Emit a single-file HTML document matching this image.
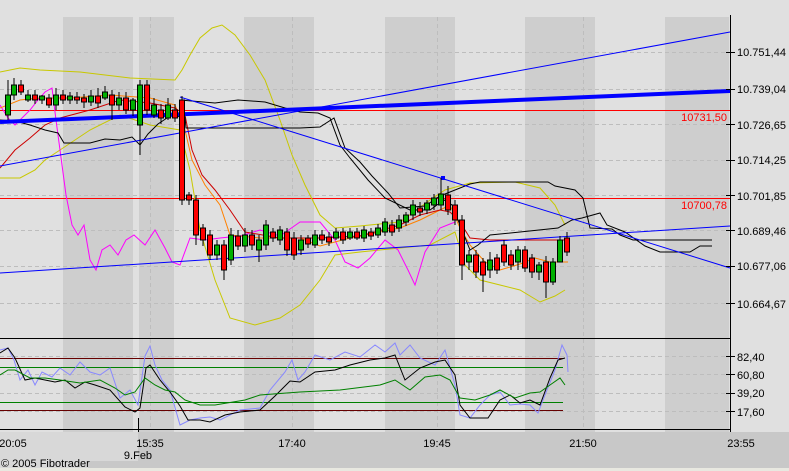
<!DOCTYPE html>
<html><head><meta charset="utf-8"><style>
html,body{margin:0;padding:0;background:#e0e0e0;}
svg{display:block;font-family:"Liberation Sans",sans-serif;}
</style></head><body>
<svg width="789" height="471" viewBox="0 0 789 471" xmlns="http://www.w3.org/2000/svg">
<rect width="789" height="471" fill="#e0e0e0"/>
<g fill="#cecece">
<rect x="63" y="17" width="70" height="415"/>
<rect x="139" y="17" width="35" height="415"/>
<rect x="244" y="17" width="70" height="415"/>
<rect x="385" y="17" width="70" height="415"/>
<rect x="525" y="17" width="70" height="415"/>
<rect x="665" y="17" width="64" height="415"/>
</g>
<g stroke="#bdbdbd" stroke-dasharray="4,3" stroke-width="1">
<line x1="0" y1="52.5" x2="730" y2="52.5"/><line x1="0" y1="89.5" x2="730" y2="89.5"/>
<line x1="0" y1="124.5" x2="730" y2="124.5"/><line x1="0" y1="160.5" x2="730" y2="160.5"/>
<line x1="0" y1="195.5" x2="730" y2="195.5"/><line x1="0" y1="230.5" x2="730" y2="230.5"/>
<line x1="0" y1="266.5" x2="730" y2="266.5"/><line x1="0" y1="303.5" x2="730" y2="303.5"/>
<line x1="0" y1="356.5" x2="730" y2="356.5"/><line x1="0" y1="374.5" x2="730" y2="374.5"/>
<line x1="0" y1="393.5" x2="730" y2="393.5"/><line x1="0" y1="411.5" x2="730" y2="411.5"/>
<line x1="150.5" y1="17" x2="150.5" y2="429"/><line x1="292.5" y1="17" x2="292.5" y2="429"/>
<line x1="437.5" y1="17" x2="437.5" y2="429"/><line x1="583.5" y1="17" x2="583.5" y2="429"/>
</g>
<line x1="0" y1="110.5" x2="730" y2="110.5" stroke="#ff0000"/>
<line x1="0" y1="198.5" x2="730" y2="198.5" stroke="#ff0000"/>
<text x="727" y="121" font-size="11" fill="#ff0000" text-anchor="end">10731,50</text>
<text x="727" y="209" font-size="11" fill="#ff0000" text-anchor="end">10700,78</text>
<g fill="none" stroke-width="1">
<polyline stroke="#c8c800" points="0,72 20,68 40,70 80,72 130,78 175,80 182,70 190,55 200,38 212,28 222,25 235,35 250,55 265,80 280,120 292,155 305,185 320,215 335,228 360,226 400,222 430,200 445,190 470,183 515,182 540,188 555,205 565,225"/>
<polyline stroke="#c8c800" points="0,178 20,178 35,170 45,160 60,150 90,130 120,115 150,125 180,130 190,170 200,230 215,280 230,318 255,325 280,318 300,305 320,280 335,255 360,252 400,248 430,245 455,232 465,265 480,280 500,285 520,290 530,296 540,302 555,296 565,290"/>
<polyline stroke="#ff00ff" points="0,105 8,118 15,125 22,118 30,110 38,100 45,92 52,88 56,120 60,150 66,195 72,225 78,235 84,225 90,260 96,270 102,250 110,245 118,255 126,240 134,235 145,245 155,230 165,248 172,262 180,265 190,238 205,240 220,238 240,236 260,230 280,236 300,222 320,222 335,240 345,262 358,268 370,258 385,240 398,250 408,270 415,285 425,252 440,228 455,222"/>
<polyline stroke="#ff8000" points="0,108 20,100 40,98 70,98 110,95 150,98 175,105 185,130 192,160 205,185 220,205 230,235 260,238 300,238 320,246 350,238 380,232 400,228 420,220 440,210 450,205 460,228 470,245 485,262 500,270 520,264 535,258 550,262 560,262 568,262"/>
<polyline stroke="#cc0000" points="0,168 15,150 30,138 45,125 60,118 90,110 120,100 150,103 175,108 185,115 192,150 202,175 215,190 230,210 245,232 280,238 320,238 360,236 400,225 420,215 440,210 450,212 460,222 470,238 490,240 520,240 545,240 565,240"/>
<polyline stroke="#000" points="0,120 15,121 30,125 45,130 58,133 64,143 90,143 105,139 120,140 132,137 140,145 148,134 158,124 170,116 185,117 186,128 300,128 320,127 334,118 345,148 360,162 372,176 388,193 400,208 425,206 440,196 455,190 470,184 480,182 520,182 548,182 555,186 575,190 583,198 587,215 590,228 612,229 620,235 633,240 712,240"/>
<polyline stroke="#000" points="180,100 215,103 238,100 265,102 285,108 300,112 318,113 330,118 340,145 350,158 368,180 385,198 410,210 430,210 444,200 452,205 470,250 478,245 490,235 520,232 558,228 572,220 582,218 600,213 607,225 625,232 645,246 660,252 690,252 700,246 712,246"/>
</g>
<g stroke="#0000ff" fill="none">
<line x1="0" y1="166" x2="730" y2="32" stroke-width="1"/>
<line x1="0" y1="122" x2="730" y2="91" stroke-width="4"/>
<line x1="180" y1="97" x2="730" y2="268" stroke-width="1"/>
<line x1="0" y1="273" x2="730" y2="226" stroke-width="1"/>
</g>
<rect x="441" y="176" width="4" height="4" fill="#0000ff"/>
<g stroke="#000" stroke-width="1">
<g fill="#00b000">
<path d="M8 80V120M14 78V100M28 90V102M42 95V104M56 88V110M70 92V104M91 90V106M105 86V100M119 92V110M133 98V116M140 80V155M154 98V118M168 98V120M217 240V260M231 228V265M245 228V252M259 235V262M266 220V250M280 226V245M301 235V255M315 230V248M336 228V240M350 228V240M364 226V242M378 224V238M385 218V236M399 215V232M406 212V226M413 200V220M427 200V214M434 194V210M441 178V210M469 250V270M490 252V278M518 246V270M539 262V280M553 258V285M560 236V262"/>
<rect x="5.5" y="95" width="5" height="20"/><rect x="11.5" y="85" width="5" height="10"/>
<rect x="25.5" y="95" width="5" height="5"/><rect x="39.5" y="96" width="5" height="4"/>
<rect x="53.5" y="95" width="5" height="10"/><rect x="67.5" y="96" width="5" height="4"/>
<rect x="88.5" y="96" width="5" height="6"/><rect x="102.5" y="92" width="5" height="6"/>
<rect x="116.5" y="98" width="5" height="7"/><rect x="130.5" y="100" width="5" height="10"/>
<rect x="137.5" y="85" width="5" height="40"/><rect x="151.5" y="105" width="5" height="10"/>
<rect x="165.5" y="105" width="5" height="13"/><rect x="214.5" y="245" width="5" height="10"/>
<rect x="228.5" y="235" width="5" height="25"/><rect x="242.5" y="235" width="5" height="11"/>
<rect x="256.5" y="240" width="5" height="10"/><rect x="263.5" y="225" width="5" height="20"/>
<rect x="277.5" y="230" width="5" height="10"/><rect x="298.5" y="240" width="5" height="10"/>
<rect x="312.5" y="235" width="5" height="10"/><rect x="333.5" y="232" width="5" height="6"/>
<rect x="347.5" y="232" width="5" height="6"/><rect x="361.5" y="230" width="5" height="8"/>
<rect x="375.5" y="228" width="5" height="7"/><rect x="382.5" y="222" width="5" height="10"/>
<rect x="396.5" y="220" width="5" height="8"/><rect x="403.5" y="215" width="5" height="7"/>
<rect x="410.5" y="205" width="5" height="10"/><rect x="424.5" y="203" width="5" height="7"/>
<rect x="431.5" y="198" width="5" height="7"/><rect x="438.5" y="194" width="5" height="11"/>
<rect x="466.5" y="255" width="5" height="7"/><rect x="487.5" y="260" width="5" height="10"/>
<rect x="515.5" y="250" width="5" height="12"/><rect x="536.5" y="265" width="5" height="7"/>
<rect x="550.5" y="262" width="5" height="20"/><rect x="557.5" y="240" width="5" height="22"/>
</g>
<g fill="#ff0000">
<path d="M21 80V95M35 90V104M49 94V108M63 90V104M77 92V104M84 94V108M98 88V108M112 90V120M126 92V114M147 80V115M161 104V124M175 104V122M182 96V205M189 192V205M196 195V245M203 224V246M210 230V260M224 240V280M238 230V250M252 230V250M273 228V242M287 228V256M294 232V260M308 235V248M322 230V244M329 232V246M343 228V244M357 228V240M371 228V240M392 220V236M420 202V216M448 186V215M455 200V225M462 215V280M476 250V278M483 258V292M497 254V274M504 240V266M511 250V270M525 246V272M532 254V278M546 256V298M567 232V256"/>
<rect x="18.5" y="85" width="5" height="7"/><rect x="32.5" y="95" width="5" height="5"/>
<rect x="46.5" y="98" width="5" height="7"/><rect x="60.5" y="95" width="5" height="5"/>
<rect x="74.5" y="97" width="5" height="3"/><rect x="81.5" y="98" width="5" height="4"/>
<rect x="95.5" y="96" width="5" height="7"/><rect x="109.5" y="95" width="5" height="10"/>
<rect x="123.5" y="98" width="5" height="12"/><rect x="144.5" y="85" width="5" height="25"/>
<rect x="158.5" y="110" width="5" height="8"/><rect x="172.5" y="110" width="5" height="8"/>
<rect x="179.5" y="100" width="5" height="100"/><rect x="186.5" y="195" width="5" height="5"/>
<rect x="193.5" y="200" width="5" height="35"/><rect x="200.5" y="228" width="5" height="12"/>
<rect x="207.5" y="235" width="5" height="20"/><rect x="221.5" y="245" width="5" height="25"/>
<rect x="235.5" y="236" width="5" height="10"/><rect x="249.5" y="235" width="5" height="10"/>
<rect x="270.5" y="232" width="5" height="6"/><rect x="284.5" y="232" width="5" height="18"/>
<rect x="291.5" y="238" width="5" height="17"/><rect x="305.5" y="238" width="5" height="6"/>
<rect x="319.5" y="235" width="5" height="5"/><rect x="326.5" y="237" width="5" height="5"/>
<rect x="340.5" y="232" width="5" height="8"/><rect x="354.5" y="232" width="5" height="6"/>
<rect x="368.5" y="232" width="5" height="4"/><rect x="389.5" y="225" width="5" height="7"/>
<rect x="417.5" y="208" width="5" height="4"/><rect x="445.5" y="195" width="5" height="15"/>
<rect x="452.5" y="205" width="5" height="15"/><rect x="459.5" y="220" width="5" height="45"/>
<rect x="473.5" y="255" width="5" height="17"/><rect x="480.5" y="262" width="5" height="13"/>
<rect x="494.5" y="258" width="5" height="12"/><rect x="501.5" y="245" width="5" height="17"/>
<rect x="508.5" y="255" width="5" height="10"/><rect x="522.5" y="250" width="5" height="18"/>
<rect x="529.5" y="258" width="5" height="14"/><rect x="543.5" y="262" width="5" height="20"/>
<rect x="564.5" y="238" width="5" height="14"/>
</g>
</g>
<line x1="0" y1="338.5" x2="730" y2="338.5" stroke="#000"/>
<line x1="0" y1="429.5" x2="730" y2="429.5" stroke="#000"/>
<line x1="0" y1="358.5" x2="563" y2="358.5" stroke="#660000"/>
<line x1="0" y1="410.5" x2="563" y2="410.5" stroke="#660000"/>
<line x1="0" y1="367.5" x2="563" y2="367.5" stroke="#008000"/>
<line x1="0" y1="402.5" x2="563" y2="402.5" stroke="#008000"/>
<g fill="none" stroke-width="1">
<polyline stroke="#8888ff" points="0,350 8,348 14,360 20,380 28,370 35,385 42,372 52,377 60,368 70,375 80,362 90,372 100,375 110,368 120,398 130,390 138,405 145,356 150,346 155,365 162,380 170,390 180,425 190,420 200,418 210,417 220,420 240,410 260,408 270,390 285,372 292,360 298,380 305,372 315,355 330,360 345,352 360,357 375,345 385,352 395,343 400,355 410,345 420,358 435,365 445,350 455,385 460,415 470,418 480,405 490,395 500,392 510,405 520,404 530,405 538,413 545,395 555,370 562,345 567,355 568,372"/>
<polyline stroke="#000" points="0,353 8,348 15,358 25,380 35,378 45,380 55,382 65,380 75,388 85,382 95,385 110,390 125,407 135,412 140,408 146,368 150,365 160,380 170,392 180,406 188,420 200,420 210,422 225,415 240,412 260,410 275,396 290,381 300,382 315,372 335,370 350,365 370,360 385,358 395,355 405,380 420,368 435,362 445,360 455,375 460,405 470,418 488,418 500,400 510,395 520,403 530,400 540,405 550,378 558,360 565,358"/>
<polyline stroke="#008000" points="0,375 8,370 15,370 30,378 45,378 60,380 80,383 100,380 115,388 125,395 135,392 145,378 155,385 165,390 175,392 185,400 200,405 215,405 245,400 260,395 300,392 340,390 380,385 395,380 410,390 425,377 440,375 450,380 460,398 475,400 490,395 500,390 515,398 530,393 540,392 550,385 560,378 565,385"/>
</g>
<line x1="730.5" y1="15" x2="730.5" y2="432" stroke="#000"/>
<g stroke="#000">
<line x1="726" y1="52.5" x2="735" y2="52.5"/><line x1="726" y1="89.5" x2="735" y2="89.5"/>
<line x1="726" y1="124.5" x2="735" y2="124.5"/><line x1="726" y1="160.5" x2="735" y2="160.5"/>
<line x1="726" y1="195.5" x2="735" y2="195.5"/><line x1="726" y1="230.5" x2="735" y2="230.5"/>
<line x1="726" y1="266.5" x2="735" y2="266.5"/><line x1="726" y1="303.5" x2="735" y2="303.5"/>
<line x1="726" y1="356.5" x2="735" y2="356.5"/><line x1="726" y1="374.5" x2="735" y2="374.5"/>
<line x1="726" y1="393.5" x2="735" y2="393.5"/><line x1="726" y1="411.5" x2="735" y2="411.5"/>
</g>
<g font-size="11" fill="#000">
<text x="737" y="56">10.751,44</text><text x="737" y="93">10.739,04</text>
<text x="737" y="129">10.726,65</text><text x="737" y="164">10.714,25</text>
<text x="737" y="200">10.701,85</text><text x="737" y="235">10.689,46</text>
<text x="737" y="270">10.677,06</text><text x="737" y="308">10.664,67</text>
<text x="737" y="361">82,40</text><text x="737" y="379">60,80</text>
<text x="737" y="397">39,20</text><text x="737" y="416">17,60</text>
</g>
<rect x="0" y="432" width="789" height="36" fill="#c8c8c8"/>
<rect x="0" y="432" width="138" height="29" fill="#d8d8d8"/>
<rect x="0" y="461" width="88" height="7" fill="#d8d8d8"/>
<rect x="0" y="468" width="789" height="3" fill="#e8e8e0"/>
<line x1="138.5" y1="418" x2="138.5" y2="432" stroke="#000"/>
<g font-size="11" fill="#000" text-anchor="middle">
<text x="13" y="447">20:05</text><text x="150" y="447">15:35</text>
<text x="292" y="447">17:40</text><text x="437" y="447">19:45</text>
<text x="583" y="447">21:50</text><text x="741" y="447">23:55</text>
<text x="138" y="459">9.Feb</text>
</g>
<text x="1" y="467" font-size="11" fill="#000">© 2005 Fibotrader</text>
</svg>
</body></html>
